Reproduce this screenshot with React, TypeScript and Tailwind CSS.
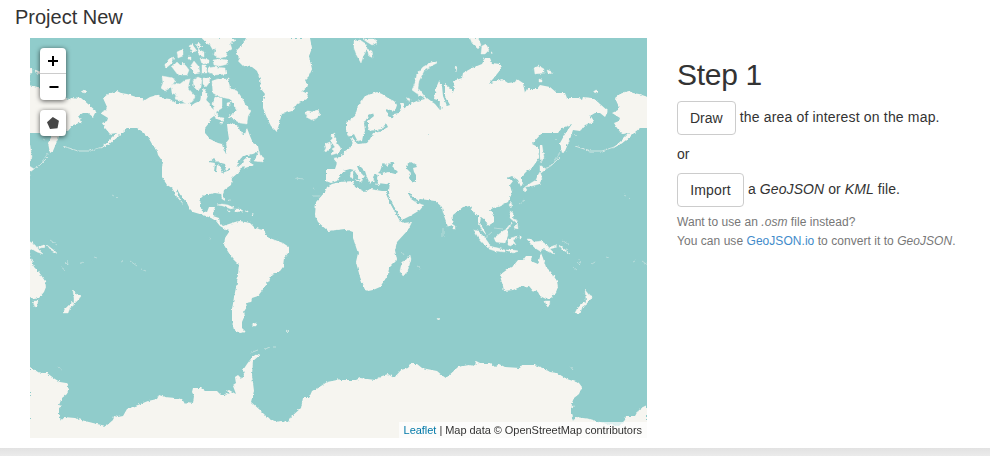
import React from "react";

const WATER = "#90cccb";
const LAND = "#f6f5f0";

const continents = [
  // North America
  "M103 98L108 94 113 92 117 91 121 93 127 94 133 96 140 98 145 100 150 97 157 95 162 98 170 99 177 104 187 103 192 105 195 103 200 101 201 96 203 90 205 99 210 106 215 111 214 116 210 119 209 123 205 128 205 133 210 139 218 143 222 144 224 151 227 149 226 143 229 139 228 133 227 124 233 123 238 126 241 133 245 134 247 128 250 136 253 143 258 146 259 151 253 154 243 156 237 163 240 163 246 158 251 158 249 162 254 165 245 168 243 166 238 173 232 178 231 185 224 190 223 195 225 201 222 199 221 194 215 193 210 194 205 194 201 198 200 205 202 211 207 212 209 207 215 207 213 213 213 216 219 218 220 223 223 226 229 224 230 230 225 229 220 226 216 221 211 218 203 215 193 212 190 209 187 203 182 197 177 191 178 195 182 201 183 204 177 197 172 188 167 185 162 177 162 167 163 162 158 155 157 151 152 144 148 137 143 132 137 128 128 128 123 132 118 137 110 143 100 149 110 140 117 133 110 134 105 128 102 123 107 121 108 118 100 113 106 110 107 107Z",
  // South America
  "M229 224L235 222 240 221 250 223 255 228 264 230 267 237 275 240 283 243 289 247 289 252 284 258 283 267 280 271 272 274 269 281 264 288 258 296 252 298 251 302 246 303 247 307 243 313 245 315 242 322 242 328 246 332 240 333 234 330 232 322 232 310 234 297 237 283 239 265 232 258 227 250 224 245 225 238 229 232Z",
  // Greenland
  "M246 38L243 44 237 50 236 54 240 58 238 61 243 66 252 67 257 71 260 79 261 89 265 94 263 99 263 108 267 118 271 126 277 132 279 123 282 114 292 111 297 104 307 99 308 94 302 91 308 86 305 80 309 76 312 69 309 56 312 48 310 38Z",
  // Africa
  "M386 193L390 202 395 212 400 219 403 223 412 222 408 230 397 242 395 250 397 260 389 268 388 275 380 287 373 290 368 291 365 290 360 277 356 262 358 253 353 238 353 232 345 229 328 231 318 222 315 215 316 202 325 192 327 187 332 184 340 182 353 181 355 187 365 192 370 189 382 191 387 191 387 193Z",
  // Eurasia
  "M326 169L335 169 337 163 333 158 340 157 345 151 350 148 353 144 351 139 353 137 355 142 358 144 367 143 370 139 373 133 379 132 388 127 386 123 382 129 370 131 368 128 368 121 374 116 373 113 369 115 364 123 365 131 363 136 362 141 358 142 354 134 349 137 346 131 346 123 355 116 358 106 365 96 371 94 377 92 382 94 388 98 394 101 397 105 395 111 386 109 388 116 393 119 394 114 399 113 402 108 400 103 404 103 403 109 412 103 417 101 425 99 421 95 427 98 435 104 440 110 443 108 441 101 434 99 436 88 439 81 442 86 443 96 447 106 450 105 445 96 445 84 449 87 453 92 455 88 453 81 462 78 463 73 472 68 482 64 485 58 490 58 492 63 500 64 501 69 493 79 488 84 502 79 508 83 515 82 517 79 523 83 525 93 528 89 537 89 540 85 550 87 557 93 565 93 567 98 578 98 582 100 583 97 593 98 600 104 608 111 605 117 600 113 595 113 590 116 594 122 585 125 580 131 573 130 570 139 565 151 562 153 560 143 565 134 572 124 567 126 562 128 558 133 542 133 532 144 538 147 539 158 532 168 527 171 522 176 520 178 523 183 521 187 518 180 512 176 507 178 513 181 510 185 512 193 508 202 498 207 493 208 490 210 494 217 494 222 488 226 485 220 481 217 480 223 485 232 487 236 482 230 478 222 478 215 474 213 470 206 463 207 453 215 452 225 448 227 443 213 442 207 435 201 420 199 416 202 409 193 411 199 417 203 424 205 420 210 410 216 402 220 397 212 391 202 388 195 389 190 390 182 386 184 378 183 377 178 378 175 374 174 373 178 375 182 372 181 370 184 367 177 365 171 359 165 357 166 359 171 365 177 363 178 362 182 358 176 354 170 350 169 343 171 340 175 337 181 331 183 326 181Z",
  // Australia
  "M501 274L508 269 514 265 518 260 523 260 526 256 532 256 531 261 538 264 541 253 543 258 546 267 551 272 557 281 558 287 556 292 551 298 546 299 540 296 537 290 534 292 529 286 520 287 513 290 504 291 503 286 500 276Z",
];

const islands = [
  // Canadian Arctic
  "M202 38L206 43 210 45 213 50 216 48 214 55 219 58 226 57 227 52 232 49 230 43 235 41 233 38Z",
  "M208 68L214 67 225 68 226 74 215 75 208 72ZM213 60L220 59 227 60 228 64 220 66 214 65Z",
  "M212 81L218 79 228 79 230 88 237 91 242 98 245 104 251 111 248 116 247 124 240 123 233 119 229 116 233 114 237 110 234 105 230 99 225 98 218 96 213 93Z",
  "M171 86L175 83 180 84 185 80 190 79 188 88 195 96 192 102 186 104 182 101 175 99 177 95 172 93Z",
  "M162 76L173 78 175 81 170 88 165 91 161 88 163 83Z",
  "M193 80L198 77 202 79 201 87 198 91 194 87ZM203 78L210 78 209 83 206 87 203 84Z",
  "M201 96L204 89 208 95 206 100 210 104 207 109 201 103ZM213 104L215 97 222 98 222 108 216 112 218 117 224 118 223 121 215 118Z",
  "M164 66L169 59 174 57 172 63 166 68ZM172 67L177 62 181 66 182 62 186 66 189 70 187 75 178 75ZM177 52L183 49 183 56 178 58ZM189 46L192 44 197 51 192 52ZM198 49L204 52 204 57 199 55ZM190 67L194 61 199 67 200 73 195 74ZM202 65L206 65 207 73 202 73ZM200 58L209 60 209 63 202 64ZM188 57L191 57 191 60 188 59Z",
  "M196 45L199 43 202 47 199 48ZM227 103L230 102 230 106 227 106ZM220 122L223 122 222 124 220 124Z",
  // Newfoundland, Iceland
  "M254 161L259 151 260 155 264 158 263 162ZM307 111L309 111 312 112 317 110 320 114 317 118 312 120 306 117 309 115 305 114Z",
  // Britain and Ireland
  "M331 135L335 133 334 137 336 138 336 142 340 147 341 150 338 153 331 155 334 151 332 149 335 147 332 143ZM325 144L330 142 331 147 328 151 324 152 326 148Z",
  // Svalbard, Franz Josef, Novaya Zemlya
  "M354 41L360 40 366 44 367 49 363 57 361 63 357 56 354 48ZM363 39L375 39 377 43 372 45 367 42ZM367 49L372 51 373 58 369 56ZM436 61L437 63 431 66 424 71 419 81 418 88 425 97 419 95 412 90 415 83 417 74 423 67 430 63Z",
  "M408 98L410 99 409 102 407 101ZM440 99L443 99 444 106 440 109ZM455 66L457 67 456 72Z",
  // Severnaya Zemlya, New Siberian Islands, Wrangel
  "M470 38L478 38 481 45 478 49 472 43ZM482 46L486 44 489 50 485 54 481 54ZM534 68L539 66 544 69 544 73 535 74ZM547 70L553 72 552 74 548 73ZM539 79L542 80 542 82 539 82ZM593 92L596 90 599 91 597 93ZM491 52L492 52 492 54Z",
  // Japan, Sakhalin, Taiwan
  "M540 146L542 145 544 157 541 163 540 157ZM540 165L546 169 541 173 540 171ZM540 172L542 179 539 184 532 186 525 187 531 183 536 180 538 175ZM525 187L527 190 525 192 523 189ZM511 202L512 204 511 208 509 205Z",
  // Philippines and Indonesia
  "M510 211L513 213 513 219 517 220 518 229 514 228 517 224 510 218ZM506 229L512 222 512 223 508 229ZM494 238L498 235 503 231 507 229 508 235 505 243 496 242Z",
  "M474 230L478 231 485 238 490 245 488 248 483 243 478 237ZM489 246L498 248 505 250 505 252 495 251 489 249ZM508 239L511 238 517 236 517 238 513 240 516 245 513 243 511 246 508 245ZM506 250L513 250 519 251 513 253ZM520 235L522 238 520 239Z",
  "M527 239L531 239 534 242 541 241 547 245 550 249 555 254 549 252 544 249 540 251 535 248 531 244ZM550 247L556 245 557 247 550 249ZM559 245L568 252 570 254 563 250Z",
  // Tasmania, New Zealand, Madagascar, Sri Lanka
  "M545 301L550 301 549 306 547 307ZM585 290L589 295 593 296 590 300 586 304 586 299ZM584 302L587 304 582 308 580 313 575 313 577 309ZM410 255L411 259 407 273 403 276 400 271 402 262 406 260ZM452 224L455 226 455 229 453 229Z",
  // Mediterranean
  "M351 172L353 171 353 178 350 177ZM355 180L361 180 360 182ZM375 184L381 184 381 185ZM385 183L389 182 387 184ZM338 176L340 175 340 177Z",
  // Caribbean and the far south
  "M217 205L222 204 228 205 234 208 231 209 223 206ZM234 209L240 209 243 211 236 212ZM227 211L230 211 230 212ZM245 211L248 211 248 212ZM252 324L257 323 256 326 253 326ZM286 330L289 332 288 332ZM437 318L440 319 438 320ZM229 199L230 199 230 201ZM253 213L253 215 252 215Z",
];

const inlandWater = [
  "M380 171L383 163 387 166 391 162 394 162 392 166 398 172 395 174 388 172 382 174 378 173Z",
  "M406 166L411 162 416 165 417 167 413 168 414 172 416 175 416 182 411 181 409 178 411 173 407 169Z",
  "M209 162L214 158 218 162 225 164 226 168 222 172 220 166 217 165 216 172 214 172 215 163ZM221 172L230 168 230 170 222 173ZM224 150L226 150 226 154ZM237 165L243 160 244 162 238 167Z",
  "M428 134L429 134 429 135ZM385 163L387 164 386 165Z",
];

const gulfs = "M387 194L391 203 396 212 401 221M409 193L412 198 418 201M177 191L183 202";

const islets =
  "M112 195L114 196M116 197L118 199M50 240L57 245M65 262L68 265 67 259M61 267L65 270M80 264L83 262M94 257L97 258M121 262L123 261M130 261L137 266M141 269L146 271M295 178L304 179M313 188L315 189M313 196L320 196M209 238L211 239M443 228L443 237M417 266L421 268M402 252L404 255M524 200L519 204M494 228L503 229M485 238L492 232M575 134L577 136M555 139L557 140M560 153L554 162";

const aleutians = "M575 146L590 151 602 151 614 147 622 143 630 136M546 169L552 165 560 157";

const antarctica =
  "M30 367L38 372 43 373 47 373 55 379 60 382 66 383 69 387 67 394 62 398 59 405 62 406 59 408 59 414 61 421 62 419 64 420 64 417 75 418 85 421 97 424 106 426 113 420 114 416 118 417 123 416 127 409 138 405 148 401 157 399 159 395 165 397 175 398 182 399 185 404 187 402 193 403 194 396 192 392 193 388 201 388 205 391 217 391 222 396 225 396 226 393 230 394 227 391 229 390 236 394 233 386 236 384 235 377 238 375 242 379 244 375 243 370 247 364 253 356 259 354 260 355 253 361 252 375 254 391 251 402 260 410 269 419 276 422 281 421 288 422 291 417 301 408 303 398 309 398 312 391 321 386 327 382 337 380 338 378 340 380 356 380 360 378 375 380 382 376 388 374 394 378 401 370 408 368 411 364 417 364 422 368 437 371 443 376 446 378 458 367 469 365 475 366 476 361 480 363 490 363 495 367 499 364 505 367 520 368 522 365 535 365 545 369 550 372 557 373 567 379 579 383 582 387 579 394 574 398 571 405 574 406 571 408 571 414 573 421 574 419 576 420 576 417 590 419 600 422 610 425 619 426 625 420 626 416 635 416 639 409 647 405V445H30Z";

function WorldMap() {
  return (
    <svg className="block h-full w-full" viewBox="30 38 617 400">
      <defs>
        <filter id="coast" x="-20" y="20" width="700" height="440" filterUnits="userSpaceOnUse" colorInterpolationFilters="sRGB">
          <feTurbulence type="fractalNoise" baseFrequency="0.35" numOctaves="2" seed="4" />
          <feDisplacementMap in="SourceGraphic" scale="3" xChannelSelector="R" yChannelSelector="G" />
        </filter>
        <g id="world">
          {continents.map((d, i) => (
            <path key={i} d={d} fill={LAND} />
          ))}
          {islands.map((d, i) => (
            <path key={i} d={d} fill={LAND} stroke={LAND} strokeWidth="0.4" />
          ))}
          {inlandWater.map((d, i) => (
            <path key={i} d={d} fill={WATER} />
          ))}
          <path d={gulfs} fill="none" stroke={WATER} strokeWidth="1.8" />
          <path d={islets} fill="none" stroke={LAND} strokeWidth="0.8" strokeOpacity="0.5" />
          <path d={aleutians} fill="none" stroke={LAND} strokeWidth="0.9" strokeOpacity="0.7" />
        </g>
      </defs>
      <rect x="30" y="38" width="617" height="400" fill={WATER} />
      <g filter="url(#coast)">
        <use href="#world" />
        <use href="#world" x="512" />
        <use href="#world" x="-512" />
        <path d="M250 353L258 350M265 349L270 347M273 347L276 347M58 366L61 370M570 366L573 370" fill="none" stroke={LAND} strokeWidth="0.8" strokeOpacity="0.6" />
        <path d={antarctica} fill={LAND} />
      </g>
    </svg>
  );
}

function MapControls() {
  return (
    <div className="absolute left-[10px] top-[10px] flex flex-col gap-[10px]">
      <div className="w-[26px] overflow-hidden rounded-[4px] bg-white shadow-[0_1px_5px_rgba(0,0,0,0.65)]">
        <button className="flex h-[26px] w-full items-center justify-center border-b border-[#cccccc]" aria-label="Zoom in">
          <svg width="10" height="10" viewBox="0 0 10 10">
            <path d="M0 5H10M5 0V10" stroke="#000" strokeWidth="2" />
          </svg>
        </button>
        <button className="flex h-[26px] w-full items-center justify-center pl-[2px]" aria-label="Zoom out">
          <svg width="10" height="10" viewBox="0 0 10 10">
            <path d="M0.5 5H9.5" stroke="#000" strokeWidth="2" />
          </svg>
        </button>
      </div>
      <button className="flex h-[26px] w-[26px] items-center justify-center rounded-[4px] bg-white pr-px shadow-[0_1px_5px_rgba(0,0,0,0.65)]" aria-label="Draw a polygon">
        <svg width="12" height="12" viewBox="0 0 12 12">
          <path d="M5.8 0L11.9 3.8 10.5 11.2 3 12 0 5.3Z" fill="#464646" />
        </svg>
      </button>
    </div>
  );
}

export default function App() {
  return (
    <div className="flex h-[456px] w-[990px] flex-col overflow-hidden bg-white font-['Liberation_Sans',Arial,sans-serif] text-sm text-[#333333]">
      <h3 className="h-[38px] pl-[15px] pt-[6px] text-[20px] leading-[22px]">Project New</h3>
      <main className="flex h-[410px] gap-[30px] pl-[30px]">
        <div className="relative h-[400px] w-[617px] shrink-0 overflow-hidden">
          <WorldMap />
          <MapControls />
          <div className="absolute bottom-0 right-0 h-[16px] whitespace-nowrap bg-white/70 px-[5px] text-[11px] leading-[16px] tracking-[-0.04px]">
            <a className="text-[#0078a8]">Leaflet</a> | Map data © OpenStreetMap contributors
          </div>
        </div>
        <section className="pt-[20px]">
          <h2 className="mb-[10px] text-[30px] leading-[33px] tracking-[-0.3px]">Step 1</h2>
          <p className="mb-[9px] flex h-[34px] items-center gap-1">
            <button className="h-[34px] rounded-[4px] border border-[#cccccc] px-3">Draw</button>
            <span className="pb-[3px] tracking-[0.17px]">the area of interest on the map.</span>
          </p>
          <p className="mb-[9px] leading-[20px]">or</p>
          <p className="mb-[6px] flex h-[34px] items-center gap-1">
            <button className="h-[34px] w-[67px] rounded-[4px] border border-[#cccccc] tracking-[0.15px]">Import</button>
            <span className="pb-[3px] tracking-[0.08px]">
              a <em>GeoJSON</em> or <em>KML</em> file.
            </span>
          </p>
          <p className="text-[12px] leading-[19px] tracking-[0.045px] text-[#777777]">
            Want to use an <em>.osm</em> file instead?
            <br />
            You can use <a className="text-[#428bca]">GeoJSON.io</a> to convert it to <em>GeoJSON</em>.
          </p>
        </section>
      </main>
      <footer className="h-[8px] bg-gradient-to-b from-[#e2e2e2] to-[#ebebeb]" />
    </div>
  );
}
